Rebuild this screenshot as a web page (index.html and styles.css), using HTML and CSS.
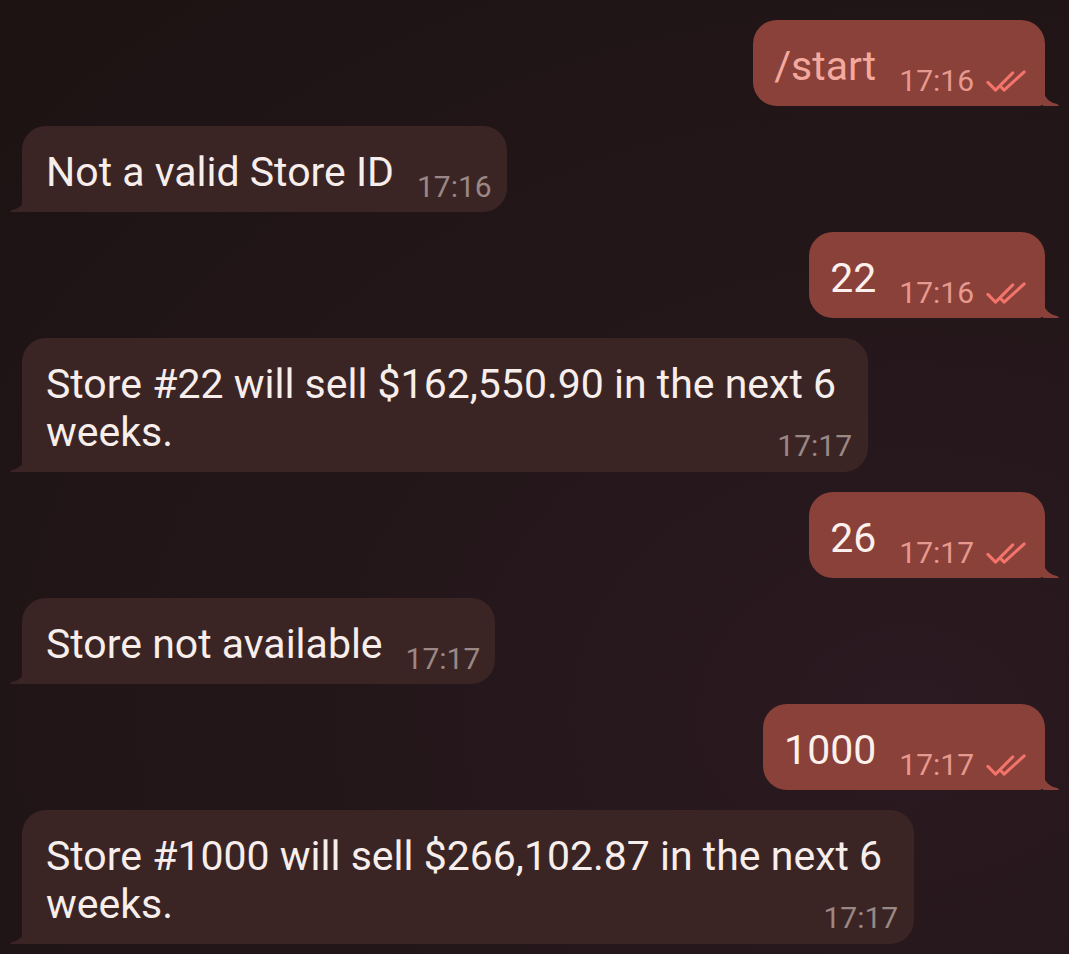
FILE: index.html
```html
<!DOCTYPE html>
<html>
<head>
<meta charset="utf-8">
<link rel="stylesheet" href="styles.css">
</head>
<body>
<div class="chat">
  <div class="row out">
    <div class="bubble out">
      <span class="text cmd">/start</span>
      <span class="meta">17:16<svg class="ticks" viewBox="0 0 44 24" width="42" height="23"><path d="M2 13 L10 21 L28 3" /><path d="M16 18 L19 21 L40 2" /></svg></span>
    </div>
  </div>
  <div class="row in">
    <div class="bubble in">
      <span class="text">Not a valid Store ID</span>
      <span class="meta">17:16</span>
    </div>
  </div>
  <div class="row out">
    <div class="bubble out">
      <span class="text">22</span>
      <span class="meta">17:16<svg class="ticks" viewBox="0 0 44 24" width="42" height="23"><path d="M2 13 L10 21 L28 3" /><path d="M16 18 L19 21 L40 2" /></svg></span>
    </div>
  </div>
  <div class="row in">
    <div class="bubble in multi">
      <div class="text">Store #22 will sell $162,550.90 in the next 6<br>weeks.</div>
      <div class="meta">17:17</div>
    </div>
  </div>
  <div class="row out">
    <div class="bubble out">
      <span class="text">26</span>
      <span class="meta">17:17<svg class="ticks" viewBox="0 0 44 24" width="42" height="23"><path d="M2 13 L10 21 L28 3" /><path d="M16 18 L19 21 L40 2" /></svg></span>
    </div>
  </div>
  <div class="row in">
    <div class="bubble in">
      <span class="text">Store not available</span>
      <span class="meta">17:17</span>
    </div>
  </div>
  <div class="row out">
    <div class="bubble out">
      <span class="text">1000</span>
      <span class="meta">17:17<svg class="ticks" viewBox="0 0 44 24" width="42" height="23"><path d="M2 13 L10 21 L28 3" /><path d="M16 18 L19 21 L40 2" /></svg></span>
    </div>
  </div>
  <div class="row in">
    <div class="bubble in multi">
      <div class="text">Store #1000 will sell $266,102.87 in the next 6<br>weeks.</div>
      <div class="meta">17:17</div>
    </div>
  </div>
</div>
</body>
</html>
```

FILE: styles.css
```css
html, body {
  margin: 0;
  height: 100%;
}
body {
  background: radial-gradient(ellipse at 85% 75%, #2b1a21 0%, #231619 45%, #1d1313 100%);
  font-family: Roboto, "Noto Sans", sans-serif;
  overflow: hidden;
}
.chat {
  display: flex;
  flex-direction: column;
  gap: 20px;
  padding: 20px 24px 0 22px;
}
.row {
  display: flex;
}
.row.out {
  justify-content: flex-end;
}
.row.in {
  justify-content: flex-start;
}
.bubble {
  position: relative;
  display: flex;
  align-items: flex-end;
  gap: 23px;
  border-radius: 24px;
  padding: 22px 15px 16px 24px;
}
.bubble.in {
  background: #3a2524;
  color: #f7eeec;
  border-bottom-left-radius: 6px;
}
.bubble.out {
  background: #8a4139;
  color: #fcf0ec;
  border-bottom-right-radius: 6px;
  padding: 22px 17px 16px 21px;
}
.bubble::after {
  content: "";
  position: absolute;
  bottom: 0;
  width: 16px;
  height: 18px;
}
.bubble.in::after {
  left: -12px;
  background: radial-gradient(circle at 0 0, transparent 15.5px, #3a2524 16.5px);
  clip-path: polygon(0 100%, 100% 0, 100% 100%);
}
.bubble.out::after {
  right: -14px;
  background: radial-gradient(circle at 100% 0, transparent 15.5px, #8a4139 16.5px);
  clip-path: polygon(100% 100%, 0 0, 0 100%);
}
.text {
  font-size: 41px;
  line-height: 48px;
}
.text.cmd {
  color: #f4a99e;
}
.meta {
  font-size: 30px;
  line-height: 30px;
  margin-bottom: -6px;
  display: flex;
  align-items: flex-end;
  gap: 12px;
  white-space: nowrap;
}
.bubble.in .meta {
  color: #9b8785;
}
.bubble.out .meta {
  color: #e6998e;
}
.ticks {
  fill: none;
  stroke: #f2746b;
  stroke-width: 3.2;
  stroke-linecap: round;
  stroke-linejoin: round;
  margin-bottom: 3px;
}
.bubble.multi {
  display: block;
  padding: 22px 16px 17px 24px;
}
.multi .text {
  padding-right: 16px;
}
.multi .meta {
  justify-content: flex-end;
  margin-top: -25px;
  margin-bottom: -6px;
}
```
